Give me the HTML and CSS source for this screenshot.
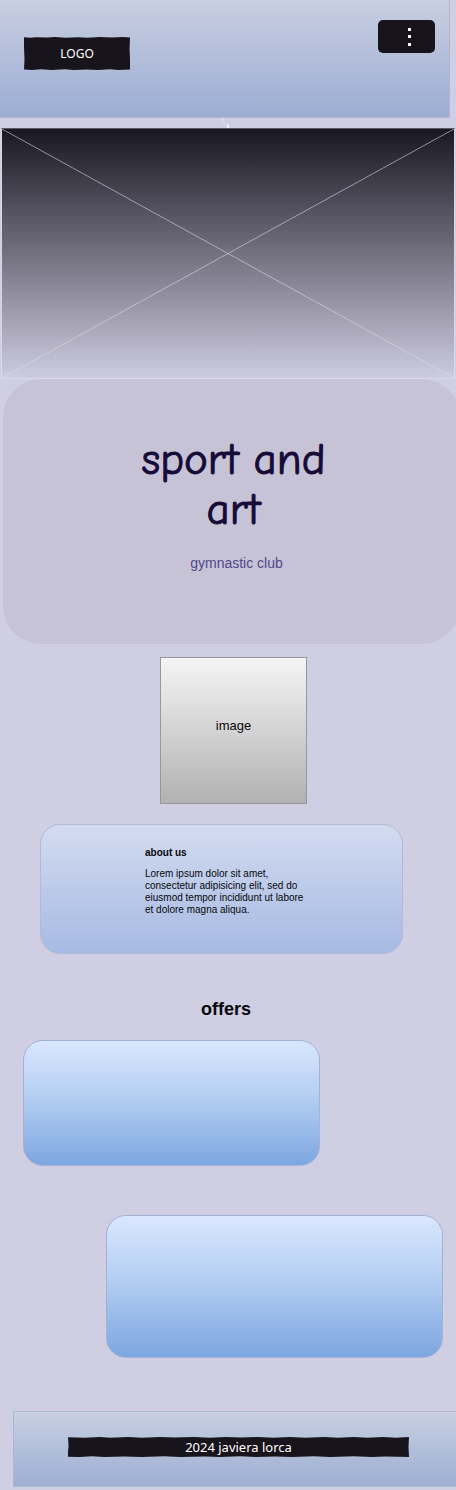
FILE: index.html
```html
<!DOCTYPE html>
<html lang="en">
<head>
<meta charset="utf-8">
<meta name="viewport" content="width=device-width, initial-scale=1">
<title>sport and art</title>
<link rel="stylesheet" href="styles.css">
</head>
<body>
<header class="header">
  <a class="logo" href="#">
    <svg class="rough" viewBox="0 0 106 33" preserveAspectRatio="none" aria-hidden="true"><path d="M0 .3L6 .7L12 .2L23 .6L31 0L42 .7L54 .2L63 .7L76 .1L88 .6L99 0L106 .4L105.6 12L106 22V32.6L94 33L86 32.3L74 33L63 32.4L50 33L41 32.3L28 32.9L17 32.3L8 33L0 32.5L.5 22L0 10Z"/></svg>
    <span class="rough-text">LOGO</span>
  </a>
  <button class="menu" type="button" aria-label="Menu">
    <svg viewBox="0 0 57 33" aria-hidden="true"><path d="M30 8h3v3h-3zM30 15h3v3h-3zM30 23h3v3h-3z"/></svg>
  </button>
</header>
<main>
  <svg class="tick" viewBox="0 0 12 10" aria-hidden="true"><path class="tick-line" d="M1 0Q1 5 4 8"/><path class="tick-dot" d="M5 6l2 1v3h-2z"/></svg>
  <svg class="hero" viewBox="0 0 454 250" preserveAspectRatio="none" aria-hidden="true"><path d="M0 0L454 250M454 0L0 250"/></svg>
  <section class="title-card">
    <h1 class="title">sport and art</h1>
    <p class="subtitle">gymnastic club</p>
  </section>
  <div class="image">image</div>
  <section class="about">
    <h2 class="about-title">about us</h2>
    <p class="about-text">Lorem ipsum dolor sit amet, consectetur adipisicing elit, sed do eiusmod tempor incididunt ut labore et dolore magna aliqua.</p>
  </section>
  <section class="offers">
    <h2 class="offers-title">offers</h2>
    <div class="offer offer-first"></div>
    <div class="offer offer-second"></div>
  </section>
</main>
<footer class="footer">
  <div class="credit">
    <svg class="rough" viewBox="0 0 341 20" preserveAspectRatio="none" aria-hidden="true"><path d="M0 .2L17 .7L32 0L42 .7L60 .1L74 .7L92 0L107 .6L126 .1L142 .7L158 0L172 .6L190 0L205 .7L222 .1L237 .7L256 0L270 .7L286 .1L299 .7L315 0L328 .7L341 .1L340.5 10L341 20L318 19.4L304 20L286 19.3L262 20L246 19.3L224 20L207 19.4L188 20L172 19.3L152 20L137 19.4L112 20L96 19.3L74 20L56 19.4L36 20L24 19.3L12 20L0 19.7V14L.6 9Z"/></svg>
    <span class="rough-text">2024 javiera lorca</span>
  </div>
</footer>
</body>
</html>
```
FILE: styles.css
```css
* { box-sizing: border-box; }

body {
  margin: 0;
  overflow-x: hidden;
  background: #d0cee2;
  color: #08080c;
  font-family: "Liberation Sans", Arial, sans-serif;
}

h1, h2, p { margin: 0; }

.header {
  display: flex;
  justify-content: space-between;
  align-items: flex-start;
  margin-right: 6px;
  padding: 20px 14px 47px 24px;
  border: solid #b3b5d0;
  border-width: 0 1px 1px 0;
  background: linear-gradient(#c9cee1, #9badd3);
}

.logo, .credit {
  position: relative;
  display: flex;
  align-items: center;
  justify-content: center;
  color: #fff;
  font-family: "Noto Sans", sans-serif;
  line-height: 20px;
  text-decoration: none;
}

.logo { width: 106px; height: 33px; margin-top: 17px; font-size: 12px; }
.credit { font-size: 13px; }

.rough {
  position: absolute;
  inset: 0;
  width: 100%;
  height: 100%;
  fill: #18141c;
}

.rough-text { position: relative; }

.menu {
  width: 57px;
  padding: 0;
  border: 0;
  border-radius: 5px;
  background: #18141c;
}

.menu svg { display: block; fill: #fff; }

.tick {
  display: block;
  width: 12px;
  height: 10px;
  margin: 0 auto;
}

.tick-line { fill: none; stroke: #dfdeed; }
.tick-dot { fill: #f4f3fa; }

.hero {
  display: block;
  width: calc(100% - 2px);
  height: 251px;
  margin: 0 1px;
  border: 1px solid #d9d8e8;
  border-top-color: #5a5865;
  background: linear-gradient(#191720, #cdcbdf);
}

.hero path {
  fill: none;
  stroke: #dedceb;
  stroke-opacity: 0.6;
}

.title-card {
  margin: 0 -4px 0 3px;
  padding: 55px 88px 72px;
  border-radius: 38px;
  background: #c6c3d6;
  text-align: center;
}

.title {
  max-width: 220px;
  margin: 0 auto;
  padding-left: 4px;
  color: #160b38;
  font-family: "Comic Sans MS", "Comic Neue", "Noto Sans", sans-serif;
  font-size: 45px;
  font-weight: 500;
  line-height: 50px;
  -webkit-text-stroke: 1px #160b38;
}

.subtitle {
  margin-top: 20px;
  padding-left: 10px;
  color: #51478a;
  font-size: 14px;
  line-height: 18px;
}

.image {
  display: flex;
  align-items: center;
  justify-content: center;
  width: 147px;
  height: 147px;
  margin: 13px calc(50% - 79px) 0 auto;
  padding-bottom: 10px;
  border: 1px solid #97979f;
  background: linear-gradient(#f5f5f6, #b1b1b1);
  font-size: 13px;
}

.about {
  margin: 20px 53px 0 40px;
  padding: 22px 96px 37px 104px;
  border: 1px solid #b1bbd9;
  border-radius: 20px;
  background: linear-gradient(#d3dbf0, #a6bae3);
  font-size: 10px;
  line-height: 12px;
}

.about-title { font-size: 10px; }
.about-text { margin-top: 9px; }

.offers-title {
  margin-top: 44px;
  padding-right: 4px;
  font-size: 18px;
  line-height: 22px;
  text-align: center;
}

.offer {
  border: 1px solid #a3b3d6;
  border-radius: 20px;
  background: linear-gradient(#dae7fe, #b3cef2 45%, #7da6e0);
}

.offer-first { height: 126px; margin: 20px 136px 0 23px; }
.offer-second { height: 143px; margin: 49px 13px 0 106px; }

.footer {
  margin: 53px 0 3px 13px;
  padding: 25px 47px 29px 54px;
  border: solid #abb6d1;
  border-width: 1px 0 1px 1px;
  background: linear-gradient(#c8cfe2, #9dafd3);
}
```
